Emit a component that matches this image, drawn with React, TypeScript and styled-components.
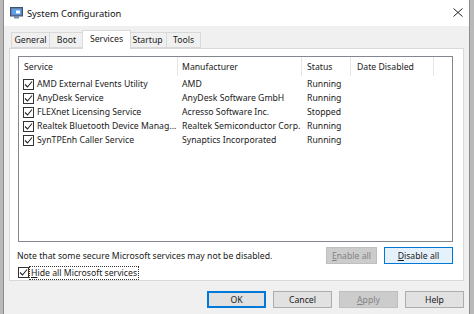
import React from 'react';
import styled, { createGlobalStyle } from 'styled-components';

const services = [
  { name: 'AMD External Events Utility', maker: 'AMD', status: 'Running' },
  { name: 'AnyDesk Service', maker: 'AnyDesk Software GmbH', status: 'Running' },
  { name: 'FLEXnet Licensing Service', maker: 'Acresso Software Inc.', status: 'Stopped' },
  { name: 'Realtek Bluetooth Device Manag...', maker: 'Realtek Semiconductor Corp.', status: 'Running' },
  { name: 'SynTPEnh Caller Service', maker: 'Synaptics Incorporated', status: 'Running' },
];

const tabs = [
  { label: 'General', width: 39 },
  { label: 'Boot', width: 35 },
  { label: 'Services', width: 49 },
  { label: 'Startup', width: 39 },
  { label: 'Tools', width: 35 },
];

const GlobalStyle = createGlobalStyle`
  html, body {
    margin: 0;
    padding: 0;
    background: #b9b9b9;
    width: 474px;
    height: 314px;
    overflow: hidden;
  }
  body {
    font-family: "Noto Sans", "Open Sans", sans-serif;
    font-size: 8.7px;
    color: #1a1a1a;
  }
`;

function CheckIcon() {
  return (
    <svg width="9" height="9" viewBox="0 0 9 9">
      <path d="M1 4.5 L3.5 7 L8 1.5" fill="none" stroke="#222" strokeWidth="1.1" />
    </svg>
  );
}

function AppIcon() {
  return (
    <svg width="13" height="12" viewBox="0 0 13 12">
      <rect x="0.5" y="0.5" width="12" height="8.5" fill="#6a7fa8" stroke="#3d4f78" />
      <rect x="2" y="2" width="9" height="5.5" fill="#5aa0e6" />
      <rect x="6" y="3.5" width="4" height="3" fill="#fff" />
      <rect x="4" y="9" width="5" height="2.5" fill="#7d8aa3" />
    </svg>
  );
}

function App() {
  return (
    <>
      <GlobalStyle />
      <Desk>
        <Window>
          <TitleBar>
            <AppIcon />
            <Title>System Configuration</Title>
            <Close>
              <svg width="10" height="9" viewBox="0 0 10 9">
                <path d="M0.5 0.5 L9.5 8.5 M9.5 0.5 L0.5 8.5" stroke="#222" strokeWidth="1" />
              </svg>
            </Close>
          </TitleBar>
          <Body>
            <TabStrip>
              {tabs.map((t) => (
                <Tab key={t.label} $w={t.width} $active={t.label === 'Services'}>
                  {t.label}
                </Tab>
              ))}
            </TabStrip>
            <Panel>
              <ListView>
                <HeaderRow>
                  <HeadCell $w={159} $pad={5}>Service</HeadCell>
                  <HeadCell $w={124} $pad={4}>Manufacturer</HeadCell>
                  <HeadCell $w={49} $pad={5}>Status</HeadCell>
                  <HeadCell $w={83} $pad={6}>Date Disabled</HeadCell>
                </HeaderRow>
                {services.map((s) => (
                  <Row key={s.name}>
                    <Cell $w={159} $pad={4}>
                      <Box>
                        <CheckIcon />
                      </Box>
                      {s.name}
                    </Cell>
                    <Cell $w={124} $pad={4}>{s.maker}</Cell>
                    <Cell $w={49} $pad={5}>{s.status}</Cell>
                    <Cell $w={83} $pad={6} />
                  </Row>
                ))}
              </ListView>
              <NoteRow>
                <Note>Note that some secure Microsoft services may not be disabled.</Note>
                <Button $w={51} $disabled>
                  <u>E</u>nable all
                </Button>
                <Button $w={69} $focus $light>
                  <u>D</u>isable all
                </Button>
              </NoteRow>
              <HideRow>
                <Box>
                  <CheckIcon />
                </Box>
                <FocusLabel>
                  <u>H</u>ide all Microsoft services
                </FocusLabel>
              </HideRow>
            </Panel>
            <Footer>
              <Button $w={59} $focus>OK</Button>
              <Button $w={59}>Cancel</Button>
              <Button $w={59} $disabled>
                <u>A</u>pply
              </Button>
              <Button $w={59}>Help</Button>
            </Footer>
          </Body>
        </Window>
      </Desk>
    </>
  );
}

const Desk = styled.div`
  width: 474px;
  height: 314px;
  display: flex;
  padding-left: 3px;
  box-sizing: border-box;
`;

const Window = styled.div`
  width: 467px;
  height: 314px;
  box-sizing: border-box;
  border-left: 1px solid #8c8c8c;
  border-right: 1px solid #8c8c8c;
  background: #f0f0f0;
  display: flex;
  flex-direction: column;
`;

const TitleBar = styled.div`
  height: 26px;
  background: #ffffff;
  display: flex;
  align-items: center;
  padding: 0 6px 0 6px;
  gap: 4px;
`;

const Title = styled.span`
  font-size: 9.3px;
  color: #111;
  flex: 1;
`;

const Close = styled.span`
  display: flex;
  margin-top: -2px;
`;

const Body = styled.div`
  flex: 1;
  display: flex;
  flex-direction: column;
  padding: 0 5px;
`;

const TabStrip = styled.div`
  height: 22px;
  display: flex;
  align-items: flex-end;
  padding-left: 2px;
  position: relative;
  z-index: 1;
`;

const Tab = styled.div<{ $w: number; $active?: boolean }>`
  width: ${(p) => p.$w}px;
  height: ${(p) => (p.$active ? 19 : 16)}px;
  margin-bottom: ${(p) => (p.$active ? -1 : 0)}px;
  margin-right: ${(p) => (p.$active ? -2 : 0)}px;
  margin-left: ${(p) => (p.$active ? -2 : -1)}px;
  box-sizing: border-box;
  border: 1px solid #d9d9d9;
  border-bottom: ${(p) => (p.$active ? 'none' : '1px solid #d9d9d9')};
  background: ${(p) => (p.$active ? '#ffffff' : '#f0f0f0')};
  display: flex;
  align-items: center;
  justify-content: center;
  padding-bottom: ${(p) => (p.$active ? 3 : 0)}px;
  position: relative;
  z-index: ${(p) => (p.$active ? 2 : 1)};
  &:first-child {
    margin-left: 0;
  }
`;

const Panel = styled.div`
  height: 233px;
  box-sizing: border-box;
  background: #ffffff;
  border: 1px solid #d9d9d9;
  padding: 7px 10px 0 8px;
  display: flex;
  flex-direction: column;
`;

const ListView = styled.div`
  height: 186px;
  box-sizing: border-box;
  border: 1px solid #828790;
  display: flex;
  flex-direction: column;
`;

const HeaderRow = styled.div`
  height: 19px;
  display: flex;
  align-items: stretch;
  margin-bottom: 1px;
`;

const HeadCell = styled.div<{ $w: number; $pad: number }>`
  width: ${(p) => p.$w}px;
  box-sizing: border-box;
  padding-left: ${(p) => p.$pad}px;
  border-right: 1px solid #e5e5e5;
  display: flex;
  align-items: center;
  color: #222;
`;

const Row = styled.div`
  height: 14px;
  display: flex;
  align-items: center;
`;

const Cell = styled.div<{ $w: number; $pad: number }>`
  width: ${(p) => p.$w}px;
  box-sizing: border-box;
  padding-left: ${(p) => p.$pad}px;
  display: flex;
  align-items: center;
  gap: 3px;
  white-space: nowrap;
  overflow: hidden;
`;

const Box = styled.span`
  width: 11px;
  height: 11px;
  box-sizing: border-box;
  border: 1px solid #333;
  background: #fff;
  display: inline-flex;
  align-items: center;
  justify-content: center;
  flex-shrink: 0;
`;

const NoteRow = styled.div`
  height: 17px;
  margin-top: 5px;
  display: flex;
  align-items: center;
`;

const Note = styled.span`
  flex: 1;
  margin-left: -1px;
`;

const Button = styled.div<{ $w: number; $focus?: boolean; $light?: boolean; $disabled?: boolean }>`
  width: ${(p) => p.$w}px;
  height: 17px;
  box-sizing: border-box;
  display: flex;
  align-items: center;
  justify-content: center;
  border: 1px solid ${(p) => (p.$focus ? '#0078d7' : p.$disabled ? '#bfbfbf' : '#adadad')};
  background: ${(p) => (p.$light ? '#e5f1fb' : p.$disabled ? '#cccccc' : '#e1e1e1')};
  color: ${(p) => (p.$disabled ? '#838383' : '#1a1a1a')};
  box-shadow: ${(p) => (p.$focus && !p.$light ? 'inset 0 0 0 1px #0078d7' : 'none')};
  & + & {
    margin-left: ${(p) => (p.$light ? 26 : 7)}px;
  }
`;

const HideRow = styled.div`
  height: 13px;
  margin-top: 2px;
  display: flex;
  align-items: center;
  gap: 1px;
`;

const FocusLabel = styled.span`
  outline: 1px dotted #333;
  line-height: 12px;
  padding: 0 1px;
`;

const Footer = styled.div`
  display: flex;
  justify-content: flex-end;
  margin-top: 10px;
`;

export default App;
